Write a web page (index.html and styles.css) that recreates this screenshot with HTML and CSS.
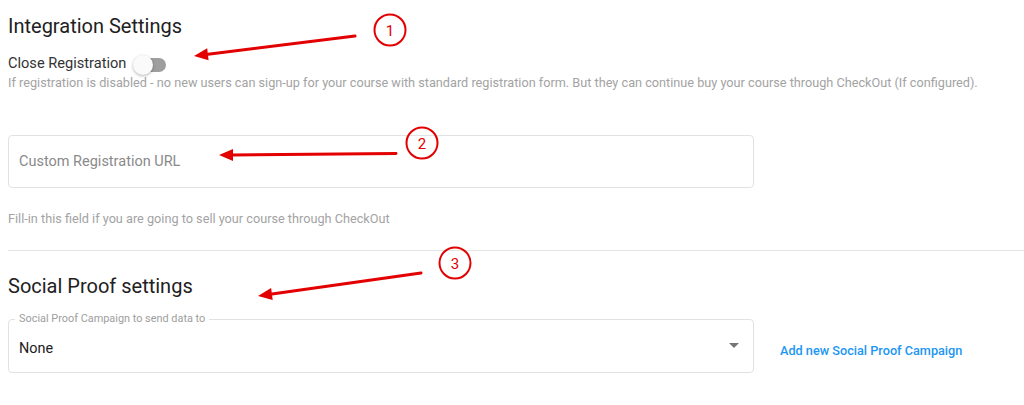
FILE: index.html
```html
<!DOCTYPE html>
<html>
    <head>
        <meta charset="utf-8">
        <title>Integration Settings</title>
        <link rel="stylesheet" href="styles.css">
    </head>
    <body>
        <div class="settings">
            <h2 class="section-title">Integration Settings</h2>

            <div class="switch-row">
                <span class="switch-label">Close Registration</span>
                <span class="toggle"><span class="toggle-track"></span><span class="toggle-thumb"></span></span>
            </div>
            <p class="help">If registration is disabled - no new users can sign-up for your course with standard registration form. But they can continue buy your course through CheckOut (If configured).</p>

            <input class="text-field" type="text" placeholder="Custom Registration URL">
            <p class="help hint">Fill-in this field if you are going to sell your course through CheckOut</p>

            <div class="divider"></div>

            <h2 class="section-title social">Social Proof settings</h2>

            <div class="select-row">
                <fieldset class="select-field">
                    <legend>Social Proof Campaign to send data to</legend>
                    <div class="select-value">
                        <span>None</span>
                        <svg class="caret" width="10" height="5" viewBox="0 0 10 5"><path d="M0 0h10L5 5z" fill="#757575"/></svg>
                    </div>
                </fieldset>
                <a class="add-link" href="#">Add new Social Proof Campaign</a>
            </div>
        </div>

        <!-- screenshot annotations -->
        <svg class="marks" width="1024" height="405" viewBox="0 0 1024 405">
            <g fill="none" stroke="#e30000" stroke-width="2">
                <circle cx="390" cy="30" r="15.5"/>
                <circle cx="422" cy="143" r="15.5"/>
                <circle cx="455" cy="263" r="15.5"/>
            </g>
            <g fill="#e30000" font-family="Roboto, sans-serif" font-size="15" text-anchor="middle">
                <text x="390" y="35.5">1</text>
                <text x="422" y="148.5">2</text>
                <text x="455" y="268.5">3</text>
            </g>
            <g stroke="#e30000" stroke-width="3" stroke-linecap="round">
                <line x1="355" y1="36" x2="208" y2="54.3"/>
                <line x1="396" y1="153.5" x2="232" y2="155"/>
                <line x1="421" y1="273" x2="272" y2="294"/>
            </g>
            <g fill="#e30000">
                <polygon points="194,56 208.6,60.2 207.2,48.3"/>
                <polygon points="219,155 233,161 233,149"/>
                <polygon points="258,296 272.7,300 271.1,288.1"/>
            </g>
        </svg>
    </body>
</html>
```

FILE: styles.css
```css
body {
    margin: 0;
    padding: 14px 0 0 8px;
    font-family: Roboto, "Liberation Sans", sans-serif;
    background-color: white;
    color: #212121;
    overflow: hidden;
}

.settings {
    display: flex;
    flex-direction: column;
    align-items: flex-start;
}

.section-title {
    margin: 0;
    font-size: 20px;
    line-height: 24px;
    font-weight: 400;
    color: #212121;
}

.section-title.social {
    margin-top: 23px;
}

.switch-row {
    display: flex;
    align-items: center;
    margin-top: 15px;
    height: 20px;
}

.switch-label {
    font-size: 14.6px;
    line-height: 20px;
    color: #333;
}

.toggle {
    position: relative;
    width: 34px;
    height: 20px;
    margin-left: 7px;
    margin-top: 4px;
}

.toggle-track {
    position: absolute;
    left: 3px;
    top: 3px;
    width: 30px;
    height: 14px;
    border-radius: 7px;
    background-color: #9e9e9e;
}

.toggle-thumb {
    position: absolute;
    left: 0;
    top: 0;
    width: 20px;
    height: 20px;
    border-radius: 50%;
    background-color: #fafafa;
    box-shadow: 0 1px 3px rgba(0, 0, 0, 0.3);
}

.help {
    margin: 2px 0 0;
    font-size: 12.7px;
    line-height: 16px;
    color: #a3a3a3;
}

.hint {
    margin-top: 23px;
}

.text-field {
    box-sizing: border-box;
    width: 746px;
    height: 53px;
    margin: 44px 0 0;
    padding: 0 10px;
    border: 1px solid #e2e2e2;
    border-radius: 4px;
    font-family: Roboto, "Liberation Sans", sans-serif;
    font-size: 14.5px;
    color: #212121;
    outline: none;
}

.text-field::placeholder {
    color: #8a8a8a;
}

.divider {
    align-self: stretch;
    height: 1px;
    margin-top: 23px;
    background-color: #e4e4e4;
}

.select-row {
    display: flex;
    margin-top: 15px;
}

.select-field {
    box-sizing: border-box;
    width: 746px;
    margin: 0;
    padding: 0 14px 13px 6px;
    border: 1px solid #e2e2e2;
    border-radius: 4px;
    min-width: 0;
}

.select-field legend {
    padding: 0 4px;
    font-size: 10.9px;
    line-height: 12px;
    color: #9e9e9e;
}

.select-value {
    display: flex;
    align-items: center;
    justify-content: space-between;
    padding: 14px 0 0 4px;
    font-size: 14.4px;
    line-height: 20px;
    color: #212121;
}

.caret {
    margin-bottom: 8px;
}

.add-link {
    align-self: flex-end;
    margin: 0 0 14px 26px;
    font-size: 12.7px;
    line-height: 16px;
    font-weight: 500;
    color: #2196f3;
    text-decoration: none;
}

.marks {
    position: absolute;
    left: 0;
    top: 0;
    pointer-events: none;
}
```
